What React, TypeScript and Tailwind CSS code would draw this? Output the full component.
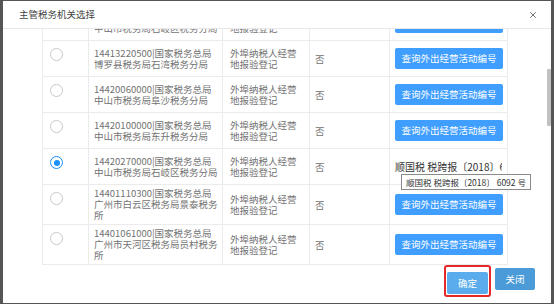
import { X } from "lucide-react";

interface Office {
  code: string;
  name: string;
  selected?: boolean;
  partial?: boolean;
}

const offices: Office[] = [
  { code: "14420270000", name: "中山市税务局石岐区税务分局", partial: true },
  { code: "14413220500", name: "博罗县税务局石湾税务分局" },
  { code: "14420060000", name: "中山市税务局阜沙税务分局" },
  { code: "14420100000", name: "中山市税务局东升税务分局" },
  { code: "14420270000", name: "中山市税务局石岐区税务分局", selected: true },
  { code: "14401110300", name: "广州市白云区税务局景泰税务所" },
  { code: "14401061000", name: "广州市天河区税务局员村税务所" },
  { code: "14401050000", name: "广州市海珠区税务局" },
];

const Radio = ({ checked }: { checked?: boolean }) => (
  <span
    className={`flex items-center justify-center w-[13px] h-[13px] rounded-full border bg-white ${
      checked ? "border-[#1890ff]" : "border-[#c8c8c8]"
    }`}
  >
    {checked && <span className="w-[6px] h-[6px] rounded-full bg-[#1890ff]" />}
  </span>
);

const App = () => {
  return (
    <div
      className="w-[554px] h-[304px] overflow-hidden bg-[#555555] pl-[3px] pt-[1px]"
      style={{ fontFamily: '"Noto Sans CJK SC", "Noto Sans", sans-serif' }}
    >
      <div className="w-[548px] h-[302px] bg-white flex flex-col">
        {/* header */}
        <div className="h-[28px] shrink-0 border-b border-[#e8e8e8] flex items-center justify-between pl-[16px] pr-[13px]">
          <span className="text-[9.5px] text-[#444]">主管税务机关选择</span>
          <X size={10} strokeWidth={2} className="text-[#555]" />
        </div>

        {/* body */}
        <div className="h-[236px] shrink-0 flex">
          <div className="flex-1 overflow-hidden pl-[39px]">
            <table className="-mt-[25px] table-fixed border-collapse w-[465px] text-[9.5px] leading-[11px] text-[#727272]">
              <colgroup>
                <col className="w-[46px]" />
                <col className="w-[134px]" />
                <col className="w-[87px]" />
                <col className="w-[80px]" />
                <col className="w-[118px]" />
              </colgroup>
              <tbody>
                {offices.map((o, i) => (
                  <tr key={i} className="h-[36px]">
                    <td className="border border-[#ebebeb] align-top pl-[7px] pt-[7px]">
                      <Radio checked={o.selected} />
                    </td>
                    <td className="border border-[#ebebeb] align-middle pl-[5px] pr-[4px] py-[3px]">
                      {o.code}|国家税务总局
                      <br />
                      {o.name}
                    </td>
                    <td className="border border-[#ebebeb] align-middle pl-[7px] pr-[7px] py-[3px]">
                      外埠纳税人经营地报验登记
                    </td>
                    <td className="border border-[#ebebeb] align-middle pl-[5px] pt-[2px]">否</td>
                    <td className="relative border border-[#ebebeb] align-middle pl-[5px] pr-[5px]">
                      {o.selected ? (
                        <>
                          <div className="whitespace-nowrap overflow-hidden text-[10px] text-[#333]">
                            顺国税 税跨报〔2018〕6092 号
                          </div>
                          <div className="absolute left-[11px] top-[25px] z-10 whitespace-nowrap border border-[#8a8a8a] bg-white px-[4px] py-[1px] text-[8.5px] leading-[12px] text-[#333]">
                            顺国税 税跨报〔2018〕 6092 号
                          </div>
                        </>
                      ) : (
                        <button className="w-[108px] h-[21px] rounded-[2px] bg-[#409eff] text-white text-[9.5px]">
                          查询外出经营活动编号
                        </button>
                      )}
                    </td>
                  </tr>
                ))}
              </tbody>
            </table>
          </div>
          {/* scrollbar */}
          <div className="w-[4px] shrink-0">
            <div className="mt-[40px] h-[57px] bg-[#c1c1c1] rounded-[1px]" />
          </div>
        </div>

        {/* footer */}
        <div className="flex-1 flex items-start justify-end gap-[4px] pr-[16px]">
          <div className="border-2 border-[#e52828] rounded-[3px] p-[1px]">
            <button className="w-[41px] h-[22px] rounded-[2px] bg-[#5aacec] text-white text-[9.5px]">确定</button>
          </div>
          <button className="mt-[3px] w-[40px] h-[22px] rounded-[2px] bg-[#4a9bd7] text-white text-[9.5px]">关闭</button>
        </div>
      </div>
    </div>
  );
};

export default App;
